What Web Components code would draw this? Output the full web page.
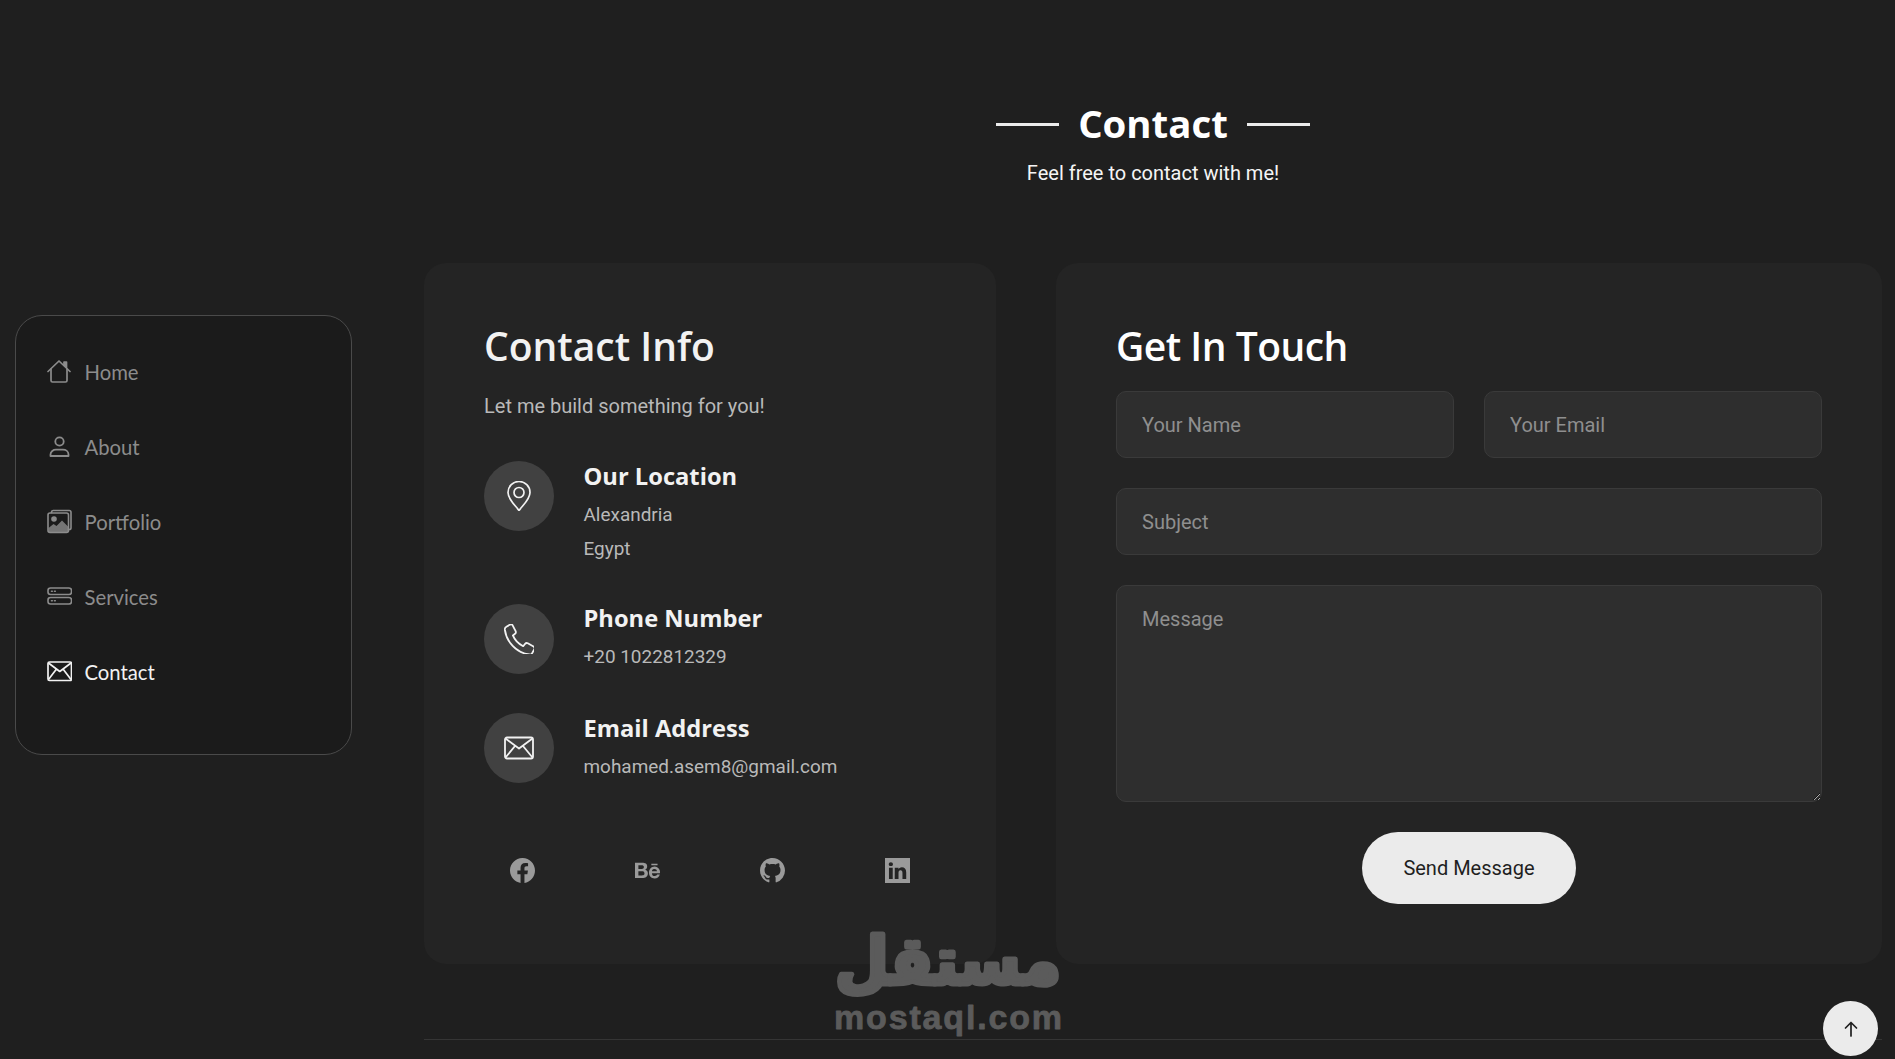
<!DOCTYPE html>
<html lang="en">
<head>
<meta charset="utf-8">
<title>Contact</title>
<style>
  html, body { margin: 0; height: 100%; overflow: hidden; background: #1f1f1f; }
  body { font-family: Roboto, "Liberation Sans", sans-serif; color: #ebebeb; }
</style>
</head>
<body>
<app-shell>
  <side-nav slot="side">
    <nav-link label="Home">
      <svg viewBox="0 0 25 25" fill="none" stroke="currentColor" stroke-width="1.700" stroke-linecap="round" stroke-linejoin="round"><path d="M1 12.500 12 2l11 10.500"/><path d="M4 10v11.500A1.500 1.500 0 0 0 5.500 23h13a1.500 1.500 0 0 0 1.500-1.500V10"/><path d="M19.500 3v5.500l-2.500-2.500V3z" fill="currentColor"/></svg>
    </nav-link>
    <nav-link label="About">
      <svg viewBox="0 0 25 25" fill="none" stroke="currentColor" stroke-width="1.800" stroke-linecap="round" stroke-linejoin="round"><circle cx="12.500" cy="7.500" r="4.200"/><path d="M3.500 22v-1.500c0-3 2.800-4.800 5.500-4.800h7c2.700 0 5.500 1.800 5.500 4.800V22z"/></svg>
    </nav-link>
    <nav-link label="Portfolio">
      <svg viewBox="0 0 25 25" fill="none" stroke="currentColor" stroke-width="1.600" stroke-linecap="round" stroke-linejoin="round"><path d="M4.500 3.500V3A1.800 1.800 0 0 1 6.300 1.500h15.900A1.800 1.800 0 0 1 24 3.300v15.400a1.800 1.800 0 0 1-1.800 1.800h-.7"/><rect x="1" y="4" width="20.500" height="19.500" rx="2"/><circle cx="7" cy="10" r="2" fill="currentColor"/><path d="M1.500 23v-4l5-4 3 2 5.500-5.500 6 6V23z" fill="currentColor" fill-opacity=".8" stroke="none"/></svg>
    </nav-link>
    <nav-link label="Services">
      <svg viewBox="0 0 25 25" fill="none" stroke="currentColor" stroke-width="1.600" stroke-linecap="round"><rect x="1" y="4" width="23.500" height="6.500" rx="2.500"/><rect x="1" y="13.500" width="23.500" height="6.500" rx="2.500"/><path d="M4.500 7.250h.8M7.500 7.250h.8M4.500 16.750h.8M7.500 16.750h.8"/></svg>
    </nav-link>
    <nav-link label="Contact" active>
      <svg viewBox="0 0 25 25" fill="none" stroke="currentColor" stroke-width="1.700" stroke-linejoin="round"><rect x="1" y="3" width="23.500" height="18.500" rx="1.500"/><path d="M1.500 4 12.750 12.500 24 4M1.500 20.500 9.500 10M24 20.500 16 10"/></svg>
    </nav-link>
  </side-nav>

  <section-title heading="Contact" sub="Feel free to contact with me!"></section-title>

  <contact-layout>
    <info-card slot="info">
      <contact-row title-text="Our Location" style="--nudge:1px">
        <svg slot="icon" viewBox="0 0 30 30" fill="none" stroke="currentColor" stroke-width="1.700" stroke-linejoin="round"><path d="M15 29.500C10 23 4 18 4 11.500a11 11 0 0 1 22 0C26 18 20 23 15 29.500z"/><circle cx="15" cy="11.500" r="5"/></svg>
        <div>Alexandria</div><div>Egypt</div>
      </contact-row>
      <contact-row title-text="Phone Number">
        <svg slot="icon" viewBox="2 1.500 25 25" fill="none" stroke="currentColor" stroke-width="1.500" stroke-linejoin="round"><path d="M4 3.800 7 2c1-.5 1.800-.2 2.300.8l2.400 4.700c.4.900.2 1.600-.5 2.200L9.400 11c1.600 4 4.600 7 8.600 9l1.600-2c.6-.7 1.400-.8 2.200-.4l4.800 2.700c.9.500 1.100 1.300.7 2.200l-1.800 3.300c-.5.900-1.300 1.300-2.300 1.100C12 25.500 4 16 2.700 6.200c-.1-1 .4-1.900 1.300-2.400z"/></svg>
        <div>+20 1022812329</div>
      </contact-row>
      <contact-row title-text="Email Address" style="--nudge:1px">
        <svg slot="icon" viewBox="0 0 30 30" fill="none" stroke="currentColor" stroke-width="1.800" stroke-linejoin="round"><rect x="1" y="4.500" width="28" height="21" rx="2"/><path d="M1.500 5.500 15 15.500 28.500 5.500M1.500 24.500 11 13M28.500 24.500 19 13"/></svg>
        <div>mohamed.asem8@gmail.com</div>
      </contact-row>
      <social-links slot="social"></social-links>
    </info-card>
    <touch-form slot="form"></touch-form>
  </contact-layout>
</app-shell>
<mostaql-mark></mostaql-mark>
<to-top></to-top>

<script>
function makeTemplate(html) {
  const t = document.createElement("template");
  t.innerHTML = html;
  return t;
}

function open(el, tpl) {
  el.attachShadow({ mode: "open" });
  el.shadowRoot.appendChild(tpl.content.cloneNode(true));
}

const HEAD_FONT = `"Open Sans", "Noto Sans", sans-serif`;

const shellTpl = makeTemplate(`
  <style>
    :host { display: grid; grid-template-columns: 424px 1fr; padding-right: 13px; }
    main { min-width: 0; padding-top: 99px; }
    footer { margin-top: 75px; border-top: 1px solid #353535; height: 19px; }
  </style>
  <slot name="side"></slot>
  <main><slot></slot><footer></footer></main>
`);
class AppShell extends HTMLElement {
  constructor() { super(); open(this, shellTpl); }
}

const navTpl = makeTemplate(`
  <style>
    :host {
      display: flex; flex-direction: column; gap: 20px; box-sizing: border-box;
      width: 337px; height: 440px; margin: 315px 0 0 15px; padding: 28px 0 0 31px;
      background: #1b1b1b; border: 1px solid #4a4a4a; border-radius: 27px;
    }
  </style>
  <slot></slot>
`);
class SideNav extends HTMLElement {
  constructor() { super(); open(this, navTpl); }
}

const navLinkTpl = makeTemplate(`
  <style>
    :host {
      display: flex; align-items: center; gap: 13px; height: 55px;
      font: 400 20.300px/1 Lato, "Open Sans", sans-serif; color: #8c8c8c;
    }
    :host([active]) { color: #f2f2f2; }
    ::slotted(svg) { width: 25px; height: 25px; flex: none; }
    span { margin-left: -.5px; padding-top: 2px; }
  </style>
  <slot></slot><span></span>
`);
class NavLink extends HTMLElement {
  constructor() {
    super();
    open(this, navLinkTpl);
    this.shadowRoot.querySelector("span").innerText = this.getAttribute("label");
  }
}

const titleTpl = makeTemplate(`
  <style>
    :host { display: block; text-align: center; }
    h2 {
      display: flex; justify-content: center; align-items: center; gap: 19px; margin: 0 0 11px;
      font: 700 38.400px/48px ${HEAD_FONT}; color: #fff;
    }
    h2::before, h2::after { content: ""; width: 63px; height: 3px; margin-top: 3px; background: #ebebeb; }
    p { margin: 0; font: 400 20px/30px Roboto, sans-serif; color: #f5f5f5; }
  </style>
  <h2></h2><p></p>
`);
class SectionTitle extends HTMLElement {
  constructor() {
    super();
    open(this, titleTpl);
    this.shadowRoot.querySelector("h2").innerText = this.getAttribute("heading");
    this.shadowRoot.querySelector("p").innerText = this.getAttribute("sub");
  }
}

const layoutTpl = makeTemplate(`
  <style>
    :host { display: grid; grid-template-columns: 572px 1fr; gap: 60px; margin-top: 75px; }
  </style>
  <slot name="info"></slot><slot name="form"></slot>
`);
class ContactLayout extends HTMLElement {
  constructor() { super(); open(this, layoutTpl); }
}

const cardCss = `
  :host { display: block; box-sizing: border-box; padding: 60px; background: #242424; border-radius: 22px; }
  h3 { margin: -1px 0 21px; font: 600 39px/48px ${HEAD_FONT}; color: #f2f2f2; }
`;

const infoTpl = makeTemplate(`
  <style>
    ${cardCss}
    p { margin: 0 0 40px; font: 400 20px/30px Roboto, sans-serif; color: #b9b9b9; }
    .rows { display: flex; flex-direction: column; gap: 39px; }
  </style>
  <h3>Contact Info</h3>
  <p>Let me build something for you!</p>
  <div class="rows"><slot></slot></div>
  <slot name="social"></slot>
`);
class InfoCard extends HTMLElement {
  constructor() { super(); open(this, infoTpl); }
}

const rowTpl = makeTemplate(`
  <style>
    :host { display: flex; gap: 29.500px; align-items: flex-start; }
    .circle {
      width: 70px; height: 70px; flex: none; border-radius: 50%;
      background: #414141; color: #f2f2f2;
      display: flex; align-items: center; justify-content: center;
    }
    ::slotted(svg) { width: 30px; height: 30px; }
    .text { margin-top: var(--nudge, 0); margin-bottom: calc(-1 * var(--nudge, 0px)); }
    h4 { margin: 0 0 7px; font: 700 23.700px/29px ${HEAD_FONT}; color: #f2f2f2; }
    .lines { font: 400 18.950px/34px Roboto, sans-serif; color: #b9b9b9; }
  </style>
  <div class="circle"><slot name="icon"></slot></div>
  <div class="text"><h4></h4><div class="lines"><slot></slot></div></div>
`);
class ContactRow extends HTMLElement {
  constructor() {
    super();
    open(this, rowTpl);
    this.shadowRoot.querySelector("h4").innerText = this.getAttribute("title-text");
  }
}

const socialTpl = makeTemplate(`
  <style>
    :host { display: flex; justify-content: space-between; margin-top: 75px; padding: 0 26px; color: #9a9a9a; }
    svg { width: 25px; height: 25px; display: block; fill: currentColor; }
  </style>
  <svg viewBox="0 0 16 16"><path d="M16 8.049c0-4.446-3.582-8.050-8-8.050C3.580 0-.002 3.603-.002 8.050c0 4.017 2.926 7.347 6.750 7.951v-5.625h-2.030V8.050H6.750V6.275c0-2.017 1.195-3.131 3.022-3.131.876 0 1.791.157 1.791.157v1.980h-1.009c-.993 0-1.303.621-1.303 1.258v1.510h2.218l-.354 2.326H9.250V16c3.824-.604 6.750-3.934 6.750-7.951z"/></svg>
  <svg viewBox="0 0 16 16"><path d="M4.654 3c.461 0 .887.035 1.278.14.39.07.711.216.996.391.286.176.497.426.641.747.14.32.216.711.216 1.137 0 .496-.106.922-.356 1.242-.215.32-.566.606-.997.817.606.176 1.067.496 1.348.922.281.426.461.957.461 1.563 0 .496-.105.922-.285 1.278a2.317 2.317 0 0 1-.782.887c-.32.215-.711.39-1.137.496a5.329 5.329 0 0 1-1.278.176L0 12.803V3h4.654zm-.285 3.978c.39 0 .71-.105.957-.285.246-.18.355-.497.355-.887 0-.216-.035-.426-.105-.567a.981.981 0 0 0-.32-.355 1.840 1.840 0 0 0-.461-.176c-.176-.035-.356-.035-.567-.035H2.170v2.310c0-.005 2.200-.005 2.200-.005zm.105 4.193c.215 0 .426-.035.606-.07.176-.035.356-.106.496-.216s.25-.215.356-.39c.07-.176.14-.391.14-.641 0-.496-.14-.852-.426-1.102-.285-.215-.676-.32-1.137-.32H2.170v2.734h2.305v.005zm6.858-.035c.286.285.711.426 1.278.426.39 0 .746-.106 1.032-.286.285-.215.46-.426.53-.64h1.740c-.286.851-.712 1.457-1.278 1.848-.566.355-1.243.566-2.060.566a4.135 4.135 0 0 1-1.527-.285 2.827 2.827 0 0 1-1.137-.782 2.851 2.851 0 0 1-.712-1.172c-.175-.461-.25-.957-.25-1.528 0-.531.07-1.032.25-1.493.18-.46.426-.852.747-1.207.32-.32.711-.606 1.137-.782a4.018 4.018 0 0 1 1.493-.285c.606 0 1.137.105 1.598.355.46.25.817.532 1.102.958.285.39.496.851.641 1.348.07.496.105.996.07 1.563h-5.150c0 .58.21 1.110.496 1.396zm2.240-3.732c-.25-.25-.642-.391-1.103-.391-.32 0-.566.07-.781.176-.215.105-.356.25-.496.39a.957.957 0 0 0-.25.497c-.036.175-.07.32-.07.46h3.196c-.07-.526-.25-.882-.497-1.132zm-3.127-3.728h3.978v.957h-3.978v-.957z"/></svg>
  <svg viewBox="0 0 16 16"><path d="M8 0C3.580 0 0 3.580 0 8c0 3.540 2.290 6.530 5.470 7.590.4.070.55-.17.55-.38 0-.19-.01-.82-.01-1.490-2.010.37-2.530-.49-2.690-.94-.09-.23-.48-.94-.82-1.130-.28-.15-.68-.52-.01-.53.63-.01 1.080.58 1.230.82.72 1.210 1.870.87 2.330.66.07-.52.28-.87.51-1.070-1.780-.2-3.640-.89-3.640-3.950 0-.87.31-1.590.82-2.150-.08-.2-.36-1.020.08-2.120 0 0 .67-.21 2.200.82.64-.18 1.320-.27 2-.27.68 0 1.360.09 2 .27 1.530-1.040 2.200-.82 2.200-.82.44 1.100.16 1.920.08 2.120.51.56.82 1.270.82 2.150 0 3.070-1.870 3.750-3.650 3.950.29.25.54.73.54 1.480 0 1.070-.01 1.930-.01 2.200 0 .21.15.46.55.38A8.012 8.012 0 0 0 16 8c0-4.420-3.580-8-8-8z"/></svg>
  <svg viewBox="0 0 16 16"><path d="M0 0h16v16H0zm4.943 13.394V6.169H2.542v7.225h2.401zm-1.200-8.212c.837 0 1.358-.554 1.358-1.248-.015-.709-.52-1.248-1.342-1.248-.822 0-1.359.54-1.359 1.248 0 .694.521 1.248 1.327 1.248h.016zm4.908 8.212V9.359c0-.216.016-.432.08-.586.173-.431.568-.878 1.232-.878.869 0 1.216.662 1.216 1.634v3.865h2.401V9.250c0-2.220-1.184-3.252-2.764-3.252-1.274 0-1.845.7-2.165 1.193v.025h-.016a5.540 5.540 0 0 1 .016-.025V6.169h-2.400c.03.678 0 7.225 0 7.225h2.400z" fill-rule="evenodd"/></svg>
`);
class SocialLinks extends HTMLElement {
  constructor() { super(); open(this, socialTpl); }
}

const formTpl = makeTemplate(`
  <style>
    ${cardCss}
    h3 { color: #fff; letter-spacing: -.5px; }
    form { display: grid; grid-template-columns: 1fr 1fr; gap: 30px; }
    input, textarea {
      box-sizing: border-box; width: 100%; height: 67px; padding: 0 25px; display: block;
      font: 400 20px/30px Roboto, sans-serif; color: #ebebeb;
      background: #2e2e2e; border: 1px solid #3a3a3a; border-radius: 10px; outline: none;
    }
    textarea { height: 217px; padding: 18px 25px; }
    ::placeholder { color: #8f8f8f; opacity: 1; }
    .full { grid-column: 1 / -1; }
    button {
      grid-column: 1 / -1; justify-self: center; width: 214px; height: 72px;
      font: 400 20px Roboto, sans-serif; color: #1f1f1f;
      background: #ebebeb; border: 0; border-radius: 36px;
    }
  </style>
  <h3>Get In Touch</h3>
  <form>
    <input placeholder="Your Name">
    <input placeholder="Your Email">
    <input class="full" placeholder="Subject">
    <textarea class="full" placeholder="Message"></textarea>
    <button type="button">Send Message</button>
  </form>
`);
class TouchForm extends HTMLElement {
  constructor() { super(); open(this, formTpl); }
}

const markTpl = makeTemplate(`
  <style>
    :host { position: absolute; left: 834px; top: 925px; width: 228px; height: 115px; pointer-events: none; }
    svg { display: block; overflow: visible; }
    text { fill: #5b5b5b; stroke: #5b5b5b; stroke-linejoin: round; }
    .ar { font: 700 66px "DejaVu Sans", sans-serif; stroke-width: 5px; }
    .la { font: 700 34px "Liberation Sans", sans-serif; stroke-width: .8px; }
  </style>
  <svg width="228" height="115" viewBox="0 0 228 115">
    <text class="ar" x="114" y="59" text-anchor="middle" direction="rtl" textLength="226" lengthAdjust="spacingAndGlyphs">مستقل</text>
    <text class="la" x="0" y="104" textLength="228" lengthAdjust="spacing">mostaql.com</text>
  </svg>
`);
class MostaqlMark extends HTMLElement {
  constructor() { super(); open(this, markTpl); }
}

const topTpl = makeTemplate(`
  <style>
    :host {
      position: fixed; right: 17px; bottom: 3px; width: 55px; height: 55px; border-radius: 50%;
      background: #ebebeb; color: #1f1f1f; display: flex; align-items: center; justify-content: center;
    }
    svg { width: 20px; height: 20px; }
  </style>
  <svg viewBox="0 0 20 20" fill="none" stroke="currentColor" stroke-width="1.700" stroke-linecap="round" stroke-linejoin="round"><path d="M10 17V3.500M4.500 9 10 3.500 15.500 9"/></svg>
`);
class ToTop extends HTMLElement {
  constructor() { super(); open(this, topTpl); }
}

customElements.define("app-shell", AppShell);
customElements.define("side-nav", SideNav);
customElements.define("nav-link", NavLink);
customElements.define("section-title", SectionTitle);
customElements.define("contact-layout", ContactLayout);
customElements.define("info-card", InfoCard);
customElements.define("contact-row", ContactRow);
customElements.define("social-links", SocialLinks);
customElements.define("touch-form", TouchForm);
customElements.define("mostaql-mark", MostaqlMark);
customElements.define("to-top", ToTop);
</script>
</body>
</html>
